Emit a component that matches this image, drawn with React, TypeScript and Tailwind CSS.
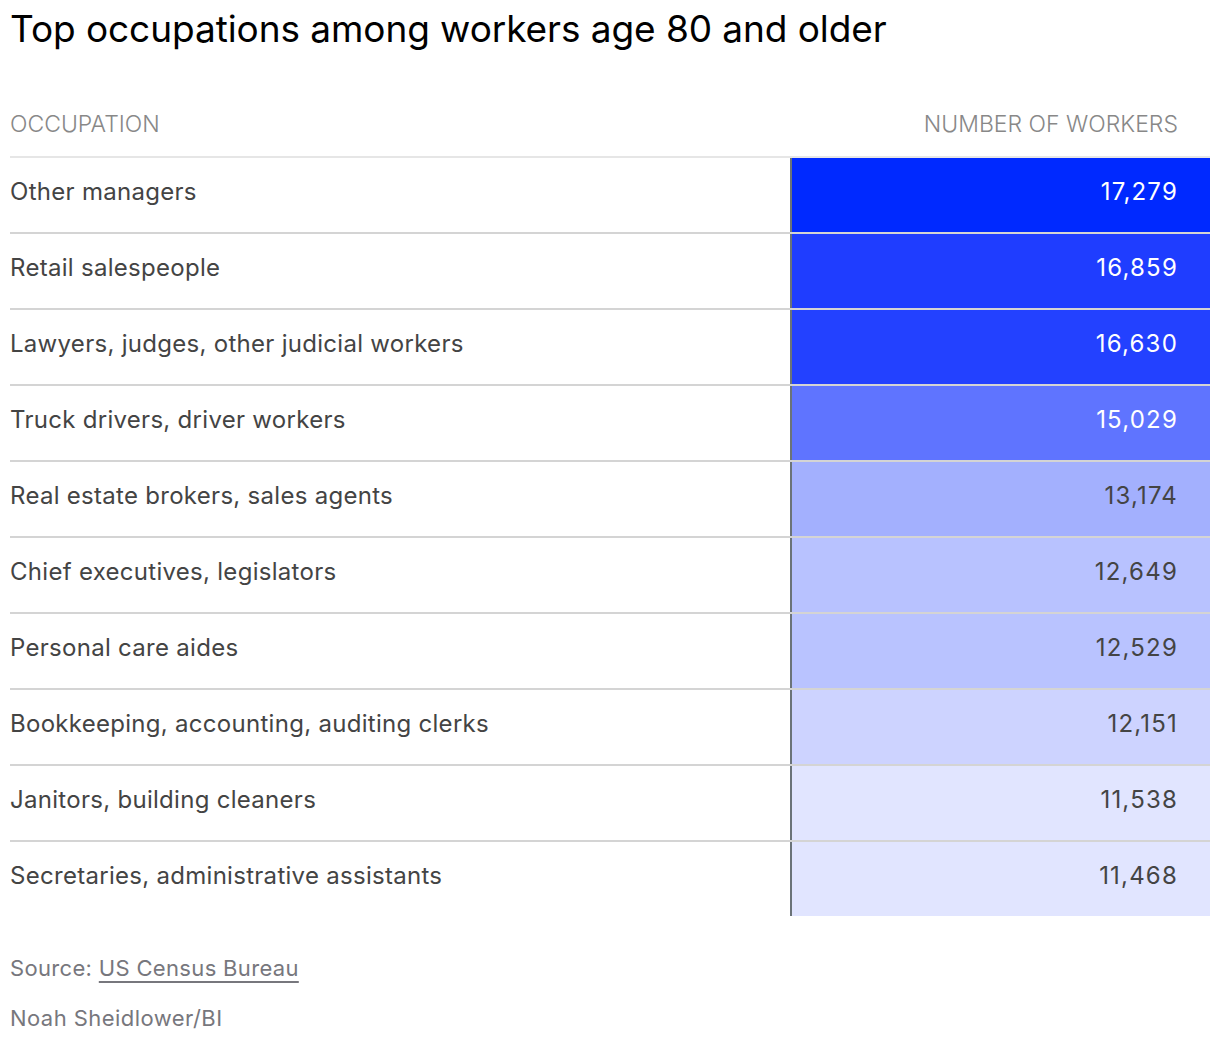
import React from 'react';

type Row = { name: string; value: string; bg: string; light: boolean };

const rows: Row[] = [
  { name: 'Other managers', value: '17,279', bg: 'bg-[#0029ff]', light: true },
  { name: 'Retail salespeople', value: '16,859', bg: 'bg-[#1f3dff]', light: true },
  { name: 'Lawyers, judges, other judicial workers', value: '16,630', bg: 'bg-[#2341ff]', light: true },
  { name: 'Truck drivers, driver workers', value: '15,029', bg: 'bg-[#5f74ff]', light: true },
  { name: 'Real estate brokers, sales agents', value: '13,174', bg: 'bg-[#a3b0fe]', light: false },
  { name: 'Chief executives, legislators', value: '12,649', bg: 'bg-[#b8c2ff]', light: false },
  { name: 'Personal care aides', value: '12,529', bg: 'bg-[#b9c3ff]', light: false },
  { name: 'Bookkeeping, accounting, auditing clerks', value: '12,151', bg: 'bg-[#cdd3ff]', light: false },
  { name: 'Janitors, building cleaners', value: '11,538', bg: 'bg-[#e1e5ff]', light: false },
  { name: 'Secretaries, administrative assistants', value: '11,468', bg: 'bg-[#e1e5ff]', light: false },
];

export default function App() {
  return (
    <div className="bg-white w-[1220px] h-[1042px] px-[10px] font-['Inter',sans-serif]">
      <h1 className="pt-[6px] text-[37px] leading-[46px] tracking-[-0.002em] text-black">
        Top occupations among workers age 80 and older
      </h1>

      <div className="mt-[53px]">
        <div className="flex items-end h-[53px] pb-[15px] border-b-2 border-[#e6e6e6] text-[23px] font-light text-[#888]">
          <div className="flex-1">OCCUPATION</div>
          <div className="pr-[32px]">NUMBER OF WORKERS</div>
        </div>

        {rows.map((r, i) => (
          <div
            key={r.name}
            className={`flex ${i < rows.length - 1 ? 'h-[76px] border-b-2 border-[#d4d4d4]' : 'h-[74px]'}`}
          >
            <div className="flex-1 flex items-center pb-[7px] text-[24px] tracking-[0.012em] text-[#444]">{r.name}</div>
            <div
              className={`w-[420px] flex items-center justify-end pr-[32px] pb-[7px] border-l-2 border-[#6b7378] text-[24px] tracking-[0.05em] ${r.bg} ${r.light ? 'text-white' : 'text-[#444]'}`}
            >
              {r.value}
            </div>
          </div>
        ))}
      </div>

      <div className="mt-[37px] text-[22px] tracking-[0.015em] text-[#77777d] leading-[30px]">
        Source: <span className="underline decoration-2 underline-offset-[5px]">US Census Bureau</span>
      </div>
      <div className="mt-[20px] text-[22px] tracking-[0.02em] text-[#77777d] leading-[30px]">
        Noah Sheidlower/BI
      </div>
    </div>
  );
}
